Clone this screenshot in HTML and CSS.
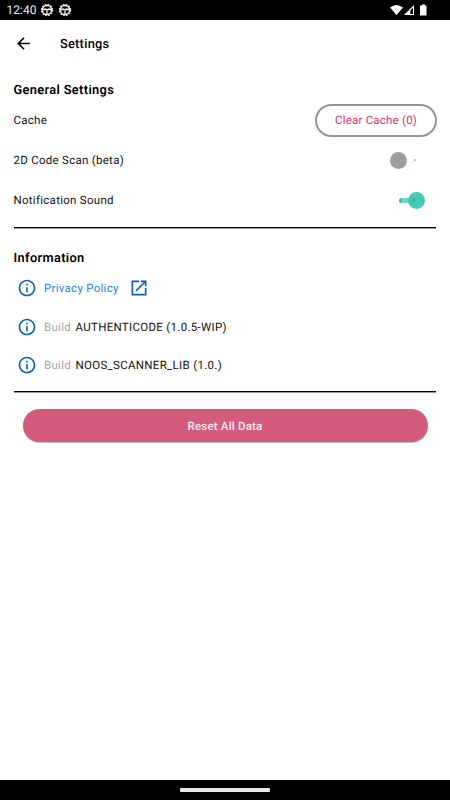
FILE: index.html
```html
<!DOCTYPE html>
<html lang="en">
<head>
<meta charset="utf-8">
<title>Settings</title>
<link rel="stylesheet" href="styles.css">
</head>
<body>
<svg class="defs" width="0" height="0">
  <symbol id="gear" viewBox="0 0 14 14"><circle cx="7" cy="7" r="4.600" fill="none" stroke="#eee" stroke-width="1.500"/><circle cx="7" cy="7" r="5.600" fill="none" stroke="#eee" stroke-width="1.200" stroke-dasharray="1.700 1.230"/><path d="M3 6.500h8M7 7v4M4.500 5.500l2.500 1.500 2.500-1.500" fill="none" stroke="#eee" stroke-width="1.300"/></symbol>
  <symbol id="info" viewBox="0 0 24 24"><path fill="#0b62b8" d="M11 7h2v2h-2zm0 4h2v6h-2zm1-9C6.480 2 2 6.480 2 12s4.480 10 10 10 10-4.480 10-10S17.520 2 12 2zm0 18c-4.410 0-8-3.590-8-8s3.590-8 8-8 8 3.590 8 8-3.590 8-8 8z"/></symbol>
</svg>
<header class="status">
  <span class="clock">12:40</span>
  <svg class="gear"><use href="#gear"/></svg>
  <svg class="gear"><use href="#gear"/></svg>
  <svg class="signals" viewBox="0 0 40 14"><path d="M0 4.500Q6.500-.5 13 4.500L6.500 12z" fill="#fff"/><path d="M14 12L24 2V12z" fill="#fff"/><path d="M20.300 7.500L23 4.800V11h-2.700z" fill="#000"/><path d="M30 2.500h2V1.500h3v1H36.500V12.500H30z" fill="#fff"/></svg>
</header>
<nav class="appbar">
  <svg class="back" viewBox="0 0 24 24"><path d="M20 11H7.830l5.590-5.590L12 4l-8 8 8 8 1.410-1.410L7.830 13H20v-2z"/></svg>
  <h1 class="title">Settings</h1>
</nav>
<main class="content">
  <section class="section">
    <h2 class="heading">General Settings</h2>
    <div class="row"><span class="label">Cache</span><button class="clear">Clear Cache (0)</button></div>
    <div class="row"><span class="label">2D Code Scan (beta)</span><span class="toggle off"><i class="knob"></i><i class="dot"></i></span></div>
    <div class="row"><span class="label">Notification Sound</span><span class="toggle on"><i class="track"></i><i class="knob"></i></span></div>
  </section>
  <section class="section info">
    <h2 class="heading">Information</h2>
    <div class="item"><svg class="icon"><use href="#info"/></svg><a class="link">Privacy Policy</a><svg class="external" viewBox="0 0 24 24"><path fill="#0b62b8" d="M19 19H5V5h7V3H3v18h18v-9h-2v7zM14 3v2h3.590l-9.830 9.830 1.410 1.410L19 6.410V10h2V3h-7z"/></svg></div>
    <div class="item"><svg class="icon"><use href="#info"/></svg><span class="build">Build</span><span class="value">AUTHENTICODE (1.0.5-WIP)</span></div>
    <div class="item"><svg class="icon"><use href="#info"/></svg><span class="build">Build</span><span class="value">NOOS_SCANNER_LIB (1.0.)</span></div>
  </section>
  <button class="reset">Reset All Data</button>
</main>
<footer class="navbar"><span class="handle"></span></footer>
</body>
</html>
```
FILE: styles.css
```css
* { box-sizing: border-box; }
body { margin: 0; width: 450px; height: 800px; display: flex; flex-direction: column; background: #fff; color: #111; font-family: Roboto, sans-serif; font-size: 11.5px; text-rendering: geometricPrecision; overflow: hidden; }
h1, h2 { margin: 0; }
button { font: inherit; margin: 0; text-rendering: inherit; }
.defs { position: absolute; }
.status { height: 20px; flex: none; background: #000; color: #eee; display: flex; align-items: center; padding: 0 20px 0 6.5px; }
.clock { font-size: 12px; width: 33.5px; white-space: nowrap; }
.gear { width: 14px; height: 14px; margin-right: 4px; }
.signals { width: 40px; height: 14px; margin-left: auto; }
.appbar { height: 47px; flex: none; display: flex; align-items: center; padding-left: 14px; }
.back { width: 19px; height: 19px; margin-right: 27px; }
.title { font-size: 12.8px; font-weight: 500; letter-spacing: .25px; color: #000; padding-top: 1px; }
.content { flex: 1; padding: 13px 14px 0 13.5px; }
.section { border-bottom: 1px solid #000; box-shadow: 0 1px 0 #999; height: 148px; }
.heading { font-size: 12.8px; line-height: 20px; height: 20px; padding-top: 1px; font-weight: 600; color: #000; letter-spacing: .35px; }
.row { height: 40px; display: flex; align-items: center; justify-content: space-between; }
.label, .link, .value, .build { letter-spacing: .28px; white-space: nowrap; }
.clear { width: 122px; height: 33px; margin-right: -1px; border: 2px solid #959595; border-radius: 17px; background: #fff; color: #e92f68; letter-spacing: .22px; padding: 0; }
.toggle { width: 46px; height: 20px; display: flex; align-items: center; }
.off { margin-right: .5px; }
.on { margin-right: .5px; }
.knob { width: 17px; height: 17px; border-radius: 50%; background: #9e9e9e; }
.dot { width: 2px; height: 2px; margin-left: 7.5px; background: #8ce5d8; }
.on { padding-left: 9px; }
.track { width: 18px; height: 5px; border-radius: 3px; background: linear-gradient(90deg, #38ad9b 2px, #65dccb 3px); }
.on .knob { margin-left: -9px; background: radial-gradient(circle at 6px 8px, #24b7a3 1px, #49cab8 2px); }
.info { height: 164px; padding-top: 20px; }
.item { height: 38.6px; display: flex; align-items: center; padding: 2px 0 0 3.5px; }
.icon { width: 20px; height: 20px; margin-right: 7px; }
.icon use { width: 20px; height: 20px; }
.link { color: #1787e0; }
.external { width: 20px; height: 20px; margin-left: 10.5px; }
.build { color: #a6a6a6; width: 31.5px; }
.value { letter-spacing: .31px; }
.reset { display: block; width: 405px; height: 33px; margin: 17px 0 0 9px; border: 0; border-radius: 17px; background: #d35c7e; color: #f5edf3; font-weight: 500; letter-spacing: .2px; box-shadow: 0 1px 1px #bbb; }
.navbar { height: 20px; flex: none; background: #000; display: flex; align-items: center; justify-content: center; }
.handle { width: 90px; height: 4px; border-radius: 1px; background: #e8e8e8; }
```
